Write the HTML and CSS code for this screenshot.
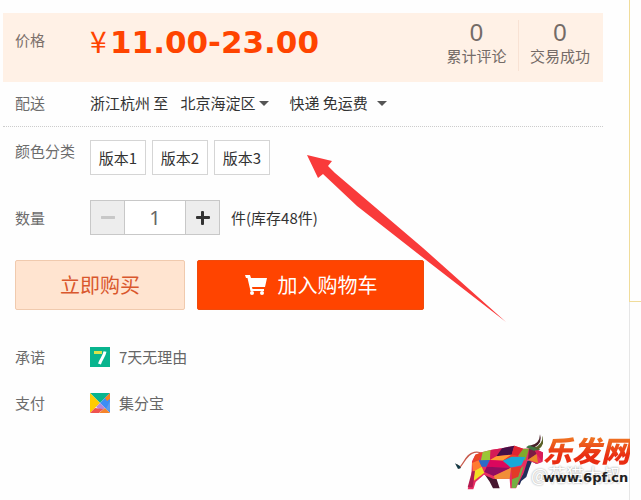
FILE: index.html
```html
<!DOCTYPE html>
<html lang="zh-CN">
<head>
<meta charset="utf-8">
<title>商品购买</title>
<link rel="stylesheet" href="styles.css">
</head>
<body>
<div class="page">
  <main class="product">
    <section class="price-band">
      <span class="label">价格</span>
      <p class="price"><span class="yen">¥</span><strong>11.00-23.00</strong></p>
      <ul class="counts">
        <li><b>0</b><span>累计评论</span></li>
        <li><b>0</b><span>交易成功</span></li>
      </ul>
    </section>

    <section class="row shipping">
      <span class="label">配送</span>
      <div class="value">
        <span>浙江杭州 至</span>
        <span class="picker city"><select aria-label="收货地区"><option>北京海淀区</option></select></span>
        <span class="picker method"><select aria-label="运送方式"><option>快递 免运费</option></select></span>
      </div>
    </section>

    <section class="row variants">
      <span class="label">颜色分类</span>
      <div class="value options">
        <button type="button">版本1</button>
        <button type="button">版本2</button>
        <button type="button">版本3</button>
      </div>
    </section>

    <section class="row quantity">
      <label class="label" for="qty">数量</label>
      <div class="value">
        <div class="stepper">
          <button type="button" class="minus" aria-label="减少"></button>
          <input id="qty" type="text" value="1">
          <button type="button" class="plus" aria-label="增加"></button>
        </div>
        <span>件(库存48件)</span>
      </div>
    </section>

    <div class="actions">
      <button type="button" class="buy">立即购买</button>
      <button type="button" class="cart">
        <svg width="24" height="22" viewBox="0 0 24 22" aria-hidden="true">
          <path fill="#fff" d="M1 1h5l1 3h16l-2 9H8l.5 2H20v2H6.500L3.500 4H2Z"/>
          <circle cx="8" cy="19" r="2" fill="#fff"/><circle cx="18" cy="19" r="2" fill="#fff"/>
        </svg>
        加入购物车
      </button>
    </div>

    <section class="row service">
      <span class="label">承诺</span>
      <div class="value">
        <svg width="20" height="20" viewBox="0 0 20 20" aria-hidden="true">
          <path fill="#08b48e" d="M0 0h20v20H0z"/>
          <path fill="#d8e34b" d="M4 4h8v3H4z"/>
          <path d="M15 4.500C14 10 11 12 9.500 17" fill="none" stroke="#fff" stroke-width="3"/>
        </svg>
        <span>7天无理由</span>
      </div>
    </section>
    <section class="row service">
      <span class="label">支付</span>
      <div class="value">
        <svg width="20" height="20" viewBox="0 0 20 20" aria-hidden="true">
          <path fill="#08b48e" d="M0 0h20L10 10Z"/>
          <path fill="#fc0" d="M0 0l10 10L0 20Z"/>
          <path fill="#3d8df5" d="M20 0v20L10 10Z"/>
          <path fill="#f58220" d="M20 0v6l-3 2-2-3Z"/>
          <path fill="#b887d8" d="M10 10l5 5-3 3-6-4Z"/>
          <path fill="#ef5350" d="M5 15l8 1-4 4H0Z"/>
          <path fill="#f4842c" d="M15 15l5 5H9Z"/>
          <path fill="#5a9cf0" d="M20 8v10l-4-2Z"/>
        </svg>
        <span>集分宝</span>
      </div>
    </section>
  </main>
  <aside class="rail"><div></div></aside>

  <svg class="pointer" width="200" height="168" viewBox="0 0 200 168" aria-hidden="true">
    <path fill="#f93a3a" d="M0 0L25 6L21 11L28 18L116 93L199 167L110 98L50 51L16 19L11 23Z"/>
  </svg>

  <div class="brand">
    <svg class="bull" width="92" height="66" viewBox="0 0 276 198" aria-hidden="true">
      <path d="M18 110l8 9C42 100 48 78 70 73q15-2 24 4" fill="none" stroke="#c75a4c" stroke-width="4"/>
      <path d="M12 106l14 7 4 7-9 3Z" fill="#143b46"/>
      <path d="M98 135l34 4 14 42h-20l-10-20Z" fill="#47172f"/>
      <path d="M222 98l43-4 4 9-14 4-12-7-8 20-9 27-15 12-5 12-8-2 6-18 12-13-4-18Z" fill="#232f5b"/>
      <path d="M73 80l22-8 24-6 34-5 37-8 27 9 31-2 29 14-3 28-16 6-28-11-12 38-23 46h-17l-2-29-49 1-28-13-25 22-7 22H50l11-38 2-46Z" fill="#e92d62"/>
      <path d="M73 80l22-8-12 25-20 8Z" fill="#e94624"/>
      <path d="M95 72l24-6-2 30-28 4Z" fill="#9bc736"/>
      <path d="M119 66l34-5-17 24-19 11Z" fill="#d51c56"/>
      <path d="M153 61l37-8-8 27-46 5Z" fill="#451047"/>
      <path d="M190 53l27 9-16 22-19-4Z" fill="#e02430"/>
      <path d="M217 62l17 1-11 35-22-14Z" fill="#81a92c"/>
      <path d="M63 105l20-8 9 19-26 15Z" fill="#ff7a32"/>
      <path d="M83 97l34-1-10 20-15 0Z" fill="#2e6bc6"/>
      <path d="M117 96l19-11 46-5-27 18Z" fill="#ff9d32"/>
      <path d="M117 96l38 2 25 21-73-3Z" fill="#db075d"/>
      <path d="M107 116l73 3-52 25-28-12Z" fill="#920d60"/>
      <path d="M155 98l27-18 19 4-21 35Z" fill="#f43b21"/>
      <path d="M180 119l-25-21 27-12 41 1-12 25Z" fill="#19a8d8"/>
      <path d="M180 119l31-3-10 31-18 7Z" fill="#e33b27"/>
      <path d="M183 154l19-8 8-25 8-8-8 29-15 38h-13Z" fill="#75ae43"/>
      <path d="M128 144l52-25-4 33-44 1Z" fill="#f18e37"/>
      <path d="M66 131l26-15 8 18-31 24Z" fill="#f2dd23"/>
      <path d="M63 130l9-1-7 49H50Z" fill="#b01b50"/>
      <path d="M234 63l14-3 9 18-26 17Z" fill="#7b1c43"/>
      <path d="M248 60l29 14-3 28-17-24Z" fill="#d91c57"/>
      <path d="M231 95l26-17 4 27Z" fill="#e58a28"/>
      <path d="M225 58l9-6 22 5 12 8-20 3Z" fill="#3f7542"/>
      <path d="M236 53q30-3 31-34 9 26-17 39Z" fill="#472028"/>
      <path d="M250 59q25-10 25-36 8 29-14 42Z" fill="#596026"/>
    </svg>
    <div class="brand-text">
      <strong>乐发网</strong>
      <span>www.6pf.cn</span>
    </div>
    <span class="watermark">@花猫大叔</span>
  </div>
</div>
</body>
</html>
```
FILE: styles.css
```css
* { box-sizing: border-box; }
body {
  margin: 0;
  background: #fefefe;
  color: #333;
  font: 15px/20px "Noto Sans CJK SC", sans-serif;
}
button, input, select { font: inherit; color: inherit; margin: 0; padding: 0; }
svg { display: block; flex: none; }
.page {
  position: relative;
  display: flex;
  gap: 26px;
  min-height: 100vh;
  padding-left: 3px;
  overflow: hidden;
}
.product { flex: 1; padding-top: 13px; }
.label { color: #6c6c6c; flex: none; width: 75px; }

.price-band {
  display: flex;
  height: 69px;
  padding: 7px 2px 11px 12px;
  background: #fff1e6;
}
.price-band .label { padding-top: 10px; color: #7b706b; }
.price {
  display: flex;
  align-items: baseline;
  gap: 4px;
  margin: 0;
  color: #ff4400;
}
.yen { font-size: 30px; line-height: 40px; width: 16px; }
.price strong { font: bold 31px "DejaVu Sans", sans-serif; }
.counts {
  display: flex;
  margin: 0 0 0 auto;
  padding: 0;
  list-style: none;
  text-align: center;
  color: #746b67;
}
.counts li { width: 83px; }
.counts li + li { border-left: 1px solid #f8e2d4; }
.counts b, .counts span { display: block; }
.counts b { font: 24px/26px "Liberation Sans", sans-serif; }

.row { display: flex; padding-left: 12px; }
.value { display: flex; align-items: center; }
.shipping { padding-top: 11px; padding-bottom: 13px; border-bottom: 1px dotted #ccc; }
.picker { display: flex; align-items: center; }
.picker::after {
  content: "";
  border: 5px solid transparent;
  border-top-color: #555;
  border-bottom: 0;
}
.picker select { appearance: none; border: 0; background: none; }
.city { gap: 3px; margin-left: 12px; }
.method { gap: 9px; margin-left: 20px; }

.variants { padding-top: 13px; }
.options { gap: 6px; }
.variants .label { padding-top: 1px; }
.options button {
  width: 56px;
  height: 35px;
  border: 1px solid #d5d5d5;
  background: #fff;
}
.quantity { padding-top: 25px; align-items: center; }
.quantity .value { gap: 11px; }
.stepper {
  display: flex;
  width: 130px;
  height: 35px;
  border: 1px solid #c8c8c8;
}
.stepper button {
  display: grid;
  place-items: center;
  flex: none;
  width: 33px;
  border: 0;
  background: #ededed;
  color: #333;
}
.stepper button::before, .stepper button::after {
  content: "";
  grid-area: 1 / 1;
  width: 14px;
  height: 3px;
  border-radius: 1px;
  background: currentColor;
}
.stepper .plus::after { width: 3px; height: 14px; }
.stepper .minus { color: #c7c7c7; }
.stepper input {
  flex: 1;
  min-width: 0;
  border: solid #c8c8c8;
  border-width: 0 1px;
  background: #fff;
  color: #666;
  font: 20px "Noto Sans", sans-serif;
  text-align: center;
}

.actions { display: flex; gap: 12px; padding: 25px 0 0 12px; margin-bottom: 37px; }
.actions button {
  display: flex;
  align-items: center;
  justify-content: center;
  gap: 10px;
  height: 50px;
  border: 1px solid #f0caae;
  border-radius: 2px;
  font-size: 20px;
}
.actions .buy { width: 170px; background: #ffe4d0; color: #d9572d; }
.actions .cart { width: 227px; background: #ff4400; border-color: #f04a0c; color: #fff; }

.service { margin-bottom: 26px; }
.service .value { gap: 9px; color: #666; }

.rail { width: 12px; display: flex; flex-direction: column; border-left: 1px solid #e6e6e6; }
.rail div {
  height: 302px;
  margin-left: -1px;
  border: solid #f0dc9a;
  border-width: 0 0 1px 1px;
}

.pointer { position: absolute; left: 307px; top: 155px; }
.brand { position: absolute; right: 11px; bottom: 6px; display: flex; }
.brand-text { position: relative; z-index: 1; padding-top: 4px; }
.brand-text strong, .brand-text span { display: block; }
.brand-text strong {
  font-size: 29px;
  line-height: 34px;
  font-weight: 900;
  font-style: italic;
  background: linear-gradient(#f18a27, #e92d12 70%);
  background-clip: text;
  color: transparent;
}
.brand-text span { padding-top: 4px; font: bold 13px/16px "DejaVu Sans", sans-serif; color: #222; }
.watermark {
  position: absolute;
  left: 80px;
  bottom: 9px;
  font-size: 18px;
  line-height: 22px;
  color: #fff;
  text-shadow: 0 0 2px #888;
  white-space: nowrap;
}
```
